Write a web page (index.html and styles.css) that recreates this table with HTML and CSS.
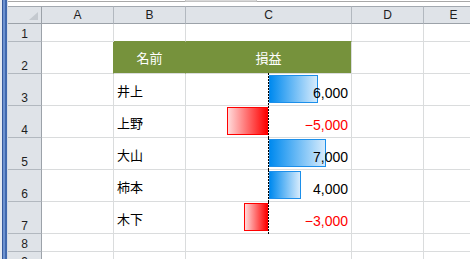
FILE: index.html
```html
<!DOCTYPE html>
<html lang="ja">
<head>
<meta charset="utf-8">
<title>損益</title>
<link rel="stylesheet" href="styles.css">
</head>
<body>
<div class="window">
  <div class="frame"></div>
  <div class="main">
    <div class="topbar"><div class="thumb"></div></div>
    <div class="sheet">
      <!-- column headings -->
      <div class="hd corner"><svg class="tri" width="9" height="8" viewBox="0 0 9 8"><polygon points="9,0 9,8 0,8" fill="#c4c9cf"/></svg></div>
      <div class="hd col">A</div>
      <div class="hd col">B</div>
      <div class="hd col">C</div>
      <div class="hd col">D</div>
      <div class="hd col">E</div>

      <!-- row 1 -->
      <div class="rh">1</div>
      <div class="c"></div>
      <div class="c top-fill"></div>
      <div class="c top-fill"></div>
      <div class="c"></div>
      <div class="c"></div>

      <!-- row 2: table heading -->
      <div class="rh">2</div>
      <div class="c left-fill"></div>
      <div class="c th th-first">名前</div>
      <div class="c th">損益</div>
      <div class="c"></div>
      <div class="c"></div>

      <!-- row 3 -->
      <div class="rh">3</div>
      <div class="c"></div>
      <div class="c name">井上</div>
      <div class="c val first">
        <div class="neg"></div><div class="axis"></div>
        <div class="pos"><div class="bar up" style="width:49px"></div></div>
        <span class="num">6,000</span>
      </div>
      <div class="c"></div>
      <div class="c"></div>

      <!-- row 4 -->
      <div class="rh">4</div>
      <div class="c"></div>
      <div class="c name">上野</div>
      <div class="c val">
        <div class="neg"><div class="bar down" style="width:41px"></div></div><div class="axis"></div>
        <div class="pos"></div>
        <span class="num minus">−5,000</span>
      </div>
      <div class="c"></div>
      <div class="c"></div>

      <!-- row 5 -->
      <div class="rh">5</div>
      <div class="c"></div>
      <div class="c name">大山</div>
      <div class="c val">
        <div class="neg"></div><div class="axis"></div>
        <div class="pos"><div class="bar up" style="width:57px"></div></div>
        <span class="num">7,000</span>
      </div>
      <div class="c"></div>
      <div class="c"></div>

      <!-- row 6 -->
      <div class="rh">6</div>
      <div class="c"></div>
      <div class="c name">柿本</div>
      <div class="c val">
        <div class="neg"></div><div class="axis"></div>
        <div class="pos"><div class="bar up" style="width:32px"></div></div>
        <span class="num">4,000</span>
      </div>
      <div class="c"></div>
      <div class="c"></div>

      <!-- row 7 -->
      <div class="rh">7</div>
      <div class="c"></div>
      <div class="c name">木下</div>
      <div class="c val">
        <div class="neg"><div class="bar down" style="width:24px"></div></div><div class="axis"></div>
        <div class="pos"></div>
        <span class="num minus">−3,000</span>
      </div>
      <div class="c"></div>
      <div class="c"></div>

      <!-- row 8 -->
      <div class="rh">8</div>
      <div class="c"></div>
      <div class="c"></div>
      <div class="c"></div>
      <div class="c"></div>
      <div class="c"></div>

      <!-- row 9 -->
      <div class="rh">9</div>
      <div class="c"></div>
      <div class="c"></div>
      <div class="c"></div>
      <div class="c"></div>
      <div class="c"></div>
    </div>
  </div>
</div>
</body>
</html>
```
FILE: styles.css
```css
html, body {
  margin: 0;
  padding: 0;
  background: #ffffff;
}

body {
  width: 470px;
  height: 259px;
  overflow: hidden;
  font-family: "Liberation Sans", "Noto Sans CJK JP", sans-serif;
  color: #000;
}

.window {
  display: flex;
  height: 259px;
}

/* blue window edge on the left */
.frame {
  flex: none;
  width: 8px;
  background: linear-gradient(to right,
    #e6ebf2 0 2px,
    #35599c 2px 3px,
    #6d92d0 3px 5px,
    #4169ae 5px 7px,
    #d3dbe6 7px 8px);
}

.main {
  flex: 1;
  min-width: 0;
  overflow: hidden;
  display: flex;
  flex-direction: column;
}

/* strip above the column headings */
.topbar {
  flex: none;
  height: 5px;
  border-top: 1px solid #ffffff;
  box-shadow: inset 0 1px 0 #a8a8a8;
  display: flex;
}

.thumb {
  margin-left: 177px;
  width: 70px;
  height: 1px;
  margin-top: -1px;
  background: #d9d9d9;
  border: 1px solid #c2c2c2;
  border-top: none;
}

.sheet {
  flex: none;
  display: grid;
  grid-template-columns: 34px 72px 72px 166px 72px 60px;
  grid-template-rows: 18px 18px 32px 32px 32px 32px 32px 32px 18px 18px;
}

/* headings */
.hd {
  background: #dfe3e8;
  border-top: 1px solid #a3a9b0;
  border-bottom: 1px solid #9ca2a9;
  border-right: 1px solid #b2b8bf;
  font-size: 12px;
  line-height: 16px;
  color: #1e1e1e;
  text-align: center;
}

.hd.col {
  padding-top: 1px;
  line-height: 15px;
}

.corner {
  border-right-color: #9ca2a9;
  display: flex;
  justify-content: flex-end;
  align-items: flex-end;
  padding: 0 3px 3px 0;
}

.tri {
  display: block;
}

.rh {
  background: #dfe3e8;
  border-right: 1px solid #9ca2a9;
  border-bottom: 1px solid #b2b8bf;
  font-size: 12px;
  line-height: 11px;
  color: #1e1e1e;
  display: flex;
  justify-content: center;
  align-items: flex-end;
  padding-bottom: 1px;
}

/* cells */
.c {
  border-right: 1px solid #dadcdd;
  border-bottom: 1px solid #dadcdd;
  display: flex;
  align-items: flex-end;
  min-width: 0;
}

.top-fill {
  border-bottom-color: #76923c;
}

.left-fill {
  border-right-color: #76923c;
}

.th {
  background: #76923c;
  color: #ffffff;
  justify-content: center;
  font-family: "Noto Sans CJK JP", sans-serif;
  font-size: 13px;
  line-height: 16px;
  padding-bottom: 7px;
}

.th-first {
  border-right-color: #76923c;
}

.name {
  font-family: "Noto Sans CJK JP", sans-serif;
  font-size: 13px;
  line-height: 16px;
  padding: 0 3px 6px;
}

/* data bar cell: negative side | axis | positive side, value on top */
.val {
  display: grid;
  grid-template-columns: 82px 1px 82px;
  grid-template-rows: 100%;
  align-items: stretch;
}

.neg {
  grid-column: 1;
  grid-row: 1;
  display: flex;
  justify-content: flex-end;
  align-items: flex-start;
}

.pos {
  grid-column: 3;
  grid-row: 1;
  display: flex;
  justify-content: flex-start;
  align-items: flex-start;
}

.axis {
  grid-column: 2;
  grid-row: 1;
  margin-bottom: -1px;
  background: repeating-linear-gradient(to bottom, #000000 0 2px, transparent 2px 3px);
}

.first .axis {
  margin-top: -1px;
}

.bar {
  box-sizing: border-box;
  height: 28px;
  margin-top: 1px;
}

.bar.up {
  border: 1px solid #1c8fea;
  background: linear-gradient(to right, #008aef, #d6ebfc);
}

.bar.down {
  border: 1px solid #ff0000;
  background: linear-gradient(to right, #ffdada, #ff0000);
}

.num {
  grid-column: 1 / -1;
  grid-row: 1;
  justify-self: end;
  align-self: end;
  font-size: 14px;
  line-height: 16px;
  padding: 0 3px 4px 0;
}

.num.minus {
  color: #ff0000;
}
```
